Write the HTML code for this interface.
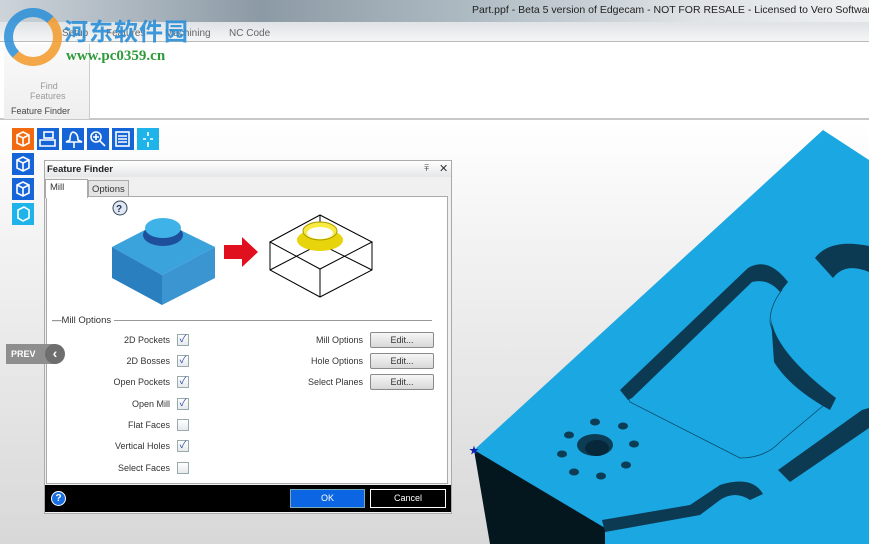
<!DOCTYPE html>
<html><head><meta charset="utf-8"><style>
*{margin:0;padding:0;box-sizing:border-box}
body{width:869px;height:544px;overflow:hidden;position:relative;font-family:"Liberation Sans","Noto Sans CJK SC",sans-serif;font-size:9px;color:#333;background:#fff}
.abs{position:absolute}
.ic{position:absolute;width:22px;height:22px;background:#1565d8}
.lbl{position:absolute;text-align:right;font-size:9px;color:#333;width:120px}
.cb{position:absolute;width:12px;height:12px;border:1px solid #9aa;background:linear-gradient(#fff,#e6e9ee);font-size:10px;line-height:10px;text-align:center;color:#2a4fa8}
.btn{position:absolute;width:64px;height:16px;border:1px solid #8a8a8a;border-radius:2px;background:linear-gradient(#f6f6f6,#d8d8d8);text-align:center;font-size:9px;line-height:14px}
</style></head><body>
<div class="abs" style="left:0;top:0;width:869px;height:22px;background:linear-gradient(90deg,#cdd4da,#8c9aa5 30%,#b0bcc4 55%,#dfe3e6 80%,#eef0f1)"></div>
<div class="abs" style="left:472px;top:4px;width:397px;overflow:hidden;font-size:10.5px;color:#222;white-space:nowrap">Part.ppf - Beta 5 version of Edgecam - NOT FOR RESALE - Licensed to Vero Software Lin</div>
<div class="abs" style="left:0;top:22px;width:869px;height:20px;background:linear-gradient(#dfe3e6,#f4f5f6);border-bottom:1px solid #bbb"></div>
<div class="abs" style="left:62px;top:28px;font-size:10px;color:#666">Setup</div>
<div class="abs" style="left:106px;top:28px;font-size:10px;color:#666">Features</div>
<div class="abs" style="left:165px;top:28px;font-size:10px;color:#666">Machining</div>
<div class="abs" style="left:229px;top:28px;font-size:10px;color:#666">NC Code</div>
<div class="abs" style="left:0;top:42px;width:869px;height:78px;background:#fff;border-bottom:2px solid #c8c8c8"></div>
<div class="abs" style="left:4px;top:44px;width:86px;height:75px;background:linear-gradient(#fafafa,#eee);border-right:1px solid #ccc"></div>
<div class="abs" style="left:38px;top:81px;font-size:9px;color:#999;text-align:center;width:22px">Find</div>
<div class="abs" style="left:30px;top:91px;font-size:9px;color:#999">Features</div>
<div class="abs" style="left:11px;top:106px;font-size:9px;color:#444">Feature Finder</div>
<div class="abs" style="left:4px;top:8px;width:58px;height:58px;border-radius:50%;border:9px solid #2a8fd8;border-right-color:#f39a2a;border-bottom-color:#f39a2a;opacity:.85"></div>
<div class="abs" style="left:64px;top:12px;font-size:24px;font-weight:bold;color:#2a8fd8;letter-spacing:1px;opacity:.9">河东软件园</div>
<div class="abs" style="left:66px;top:48px;font-size:15px;font-weight:bold;color:#2e9a3a;font-family:'Liberation Serif',serif">www.pc0359.cn</div>
<div class="abs" style="left:0;top:122px;width:869px;height:422px;background:linear-gradient(#fff,#f2f2f2 30%,#d8d8d8)"></div>
<svg class="abs" style="left:0;top:0" width="869" height="544">
<polygon points="823,130 869,160 869,544 605,544 474,450" fill="#1aa7e2"/>
<polygon points="474,450 490,544 605,544 605,528" fill="#04161e"/>
<path d="M628,398 L752,280 Q768,272 782,290 Q770,305 770,322 Q775,350 830,400 L780,442 Q765,458 740,458 L630,402 Z" fill="none" stroke="#0a4a66" stroke-width="0.8"/>
<path d="M628,400 L620,390 L748,268 Q768,256 788,282 L780,292 Q768,278 752,282 L632,398Z" fill="#0b3a52"/>
<path d="M771,318 Q775,352 836,398 L830,410 Q790,388 774,362 Z" fill="#0b3a52"/>
<path d="M815,258 Q830,238 869,246 L869,272 Q845,262 833,278 Z" fill="#0b3a52"/>
<path d="M778,470 L862,410 L869,408 L869,428 L790,482 Z" fill="#0b3a52"/>
<path d="M602,520 L690,505 L720,485 Q752,475 763,494 L750,500 Q735,490 720,500 L700,515 L605,532Z" fill="#0b3a52"/>
<g fill="#0c3d55"><ellipse cx="595" cy="445" rx="18" ry="11"/><ellipse cx="597" cy="448" rx="12" ry="8" fill="#06283a"/>
<ellipse cx="595" cy="422" rx="5" ry="3.5"/><ellipse cx="623" cy="426" rx="5" ry="3.5"/><ellipse cx="634" cy="444" rx="5" ry="3.5"/><ellipse cx="626" cy="465" rx="5" ry="3.5"/><ellipse cx="601" cy="476" rx="5" ry="3.5"/><ellipse cx="574" cy="472" rx="5" ry="3.5"/><ellipse cx="562" cy="454" rx="5" ry="3.5"/><ellipse cx="569" cy="435" rx="5" ry="3.5"/></g>
<text x="469" y="454" font-size="10" fill="#12a">★</text>
</svg>
<div class="ic" style="left:12px;top:128px;background:#f26a10"></div>
<div class="ic" style="left:37px;top:128px"></div>
<div class="ic" style="left:62px;top:128px"></div>
<div class="ic" style="left:87px;top:128px"></div>
<div class="ic" style="left:112px;top:128px"></div>
<div class="ic" style="left:137px;top:128px;background:#1eb4ea"></div>
<div class="ic" style="left:12px;top:153px"></div>
<div class="ic" style="left:12px;top:178px"></div>
<div class="ic" style="left:12px;top:203px;background:#1eb4ea"></div>
<svg class="abs" style="left:12px;top:128px" width="150" height="100" fill="none" stroke="#fff" stroke-width="1.6">
<path d="M5,7 L11,4 L17,7 L17,15 L11,18 L5,15Z M5,7 L11,10 L17,7 M11,10 L11,18"/>
<rect x="32" y="4" width="9" height="6"/><path d="M28,12 L43,12 L43,18 L28,18Z"/>
<path d="M61,4 Q66,5 66,12 L70,14 L54,14 L58,12 Q58,5 61,4 M62,14 L62,20"/>
<circle cx="84" cy="9" r="5"/><path d="M88,13 L93,18 M81,9 L87,9 M84,6 L84,12"/>
<rect x="104" y="4" width="13" height="14"/><path d="M106,8 L115,8 M106,11 L115,11 M106,14 L115,14"/>
<path d="M136,4 L136,8 M131,11 L134,11 M138,11 L141,11 M136,14 L136,19"/>
<path d="M5,32 L11,29 L17,32 L17,40 L11,43 L5,40Z M5,32 L11,35 L17,32 M11,35 L11,43"/>
<path d="M5,57 L11,54 L17,57 L17,65 L11,68 L5,65Z M5,57 L11,60 L17,57 M11,60 L11,68"/>
<path d="M6,82 L12,79 L17,82 L17,90 L11,93 L6,90Z"/>
</svg>
<div class="abs" style="left:44px;top:160px;width:408px;height:354px;background:#f0f0f0;border:1px solid #aaa"></div>
<div class="abs" style="left:45px;top:161px;width:406px;height:16px;background:linear-gradient(#fff,#e4e6e8)"></div>
<div class="abs" style="left:47px;top:164px;font-weight:bold;font-size:9.5px;color:#222">Feature Finder</div>
<div class="abs" style="left:424px;top:163px;font-size:9px;color:#444">⩱</div>
<div class="abs" style="left:439px;top:162px;font-size:11px;color:#333">✕</div>
<div class="abs" style="left:88px;top:180px;width:41px;height:17px;background:#e4e4e4;border:1px solid #aaa"></div>
<div class="abs" style="left:92px;top:184px;font-size:9.5px">Options</div>
<div class="abs" style="left:46px;top:196px;width:402px;height:288px;background:#fff;border:1px solid #aaa"></div>
<div class="abs" style="left:45px;top:179px;width:43px;height:19px;background:#fff;border:1px solid #aaa;border-bottom:none"></div>
<div class="abs" style="left:50px;top:182px;font-size:9.5px">Mill</div>
<svg class="abs" style="left:100px;top:190px" width="290" height="125">
<circle cx="20" cy="18" r="7" fill="#dfe8f2" stroke="#345" stroke-width="1"/><text x="16" y="22" font-size="10" font-weight="bold" fill="#235">?</text>
<polygon points="12,57 62,31 115,57 62,85" fill="#3ba3dc"/>
<polygon points="12,57 62,85 62,115 12,88" fill="#2a7fbf"/>
<polygon points="62,85 115,57 115,88 62,115" fill="#3a95d1"/>
<ellipse cx="63" cy="45" rx="20" ry="11" fill="#1d4f9a"/><ellipse cx="63" cy="38" rx="18" ry="10" fill="#3fb2e8"/>
<polygon points="124,55 142,55 142,47 158,62 142,77 142,69 124,69" fill="#e0101e"/>
<g stroke="#000" fill="none" stroke-width="1"><polygon points="170,52 220,25 272,52 220,79"/><path d="M170,52 L170,80 L220,107 L272,80 L272,52 M220,79 L220,107 M170,80 L220,54 L272,80 M220,25 L220,54"/></g>
<ellipse cx="220" cy="50" rx="23" ry="11" fill="#e8d40a"/><ellipse cx="220" cy="41" rx="17" ry="9" fill="#f7ea40" stroke="#a90"/><ellipse cx="220" cy="43" rx="13" ry="6" fill="#fff"/>
</svg>
<div class="abs" style="left:52px;top:320px;width:380px;border-top:1px solid #999"></div>
<div class="abs" style="left:52px;top:315px;background:#fff;padding-right:3px;font-size:9.5px">—Mill Options</div>
<div class="lbl" style="left:50px;top:335px">2D Pockets</div><div class="cb" style="left:177px;top:334px">✓</div>
<div class="lbl" style="left:50px;top:356px">2D Bosses</div><div class="cb" style="left:177px;top:355px">✓</div>
<div class="lbl" style="left:50px;top:377px">Open Pockets</div><div class="cb" style="left:177px;top:376px">✓</div>
<div class="lbl" style="left:50px;top:399px">Open Mill</div><div class="cb" style="left:177px;top:398px">✓</div>
<div class="lbl" style="left:50px;top:420px">Flat Faces</div><div class="cb" style="left:177px;top:419px"></div>
<div class="lbl" style="left:50px;top:441px">Vertical Holes</div><div class="cb" style="left:177px;top:440px">✓</div>
<div class="lbl" style="left:50px;top:463px">Select Faces</div><div class="cb" style="left:177px;top:462px"></div>
<div class="lbl" style="left:243px;top:335px">Mill Options</div><div class="btn" style="left:370px;top:332px">Edit...</div>
<div class="lbl" style="left:243px;top:356px">Hole Options</div><div class="btn" style="left:370px;top:353px">Edit...</div>
<div class="lbl" style="left:243px;top:377px">Select Planes</div><div class="btn" style="left:370px;top:374px">Edit...</div>
<div class="abs" style="left:45px;top:485px;width:406px;height:27px;background:#000"></div>
<div class="abs" style="left:51px;top:491px;width:15px;height:15px;border-radius:50%;background:#1a6fe0;border:1px solid #fff;color:#fff;font-weight:bold;text-align:center;font-size:10px;line-height:13px">?</div>
<div class="abs" style="left:290px;top:489px;width:75px;height:19px;background:#0c66e4;border:1px solid #7ab;color:#fff;text-align:center;line-height:17px">OK</div>
<div class="abs" style="left:370px;top:489px;width:76px;height:19px;background:#000;border:1px solid #fff;color:#fff;text-align:center;line-height:17px">Cancel</div>
<div class="abs" style="left:6px;top:344px;width:58px;height:20px;background:#8e8e8e;border-radius:0 10px 10px 0;z-index:5"></div>
<div class="abs" style="left:11px;top:349px;color:#fff;font-weight:bold;font-size:9px;z-index:6">PREV</div>
<div class="abs" style="left:45px;top:344px;width:20px;height:20px;border-radius:50%;background:#6e6e6e;color:#fff;text-align:center;font-size:14px;line-height:18px;font-weight:bold;z-index:6">‹</div>
</body></html>
